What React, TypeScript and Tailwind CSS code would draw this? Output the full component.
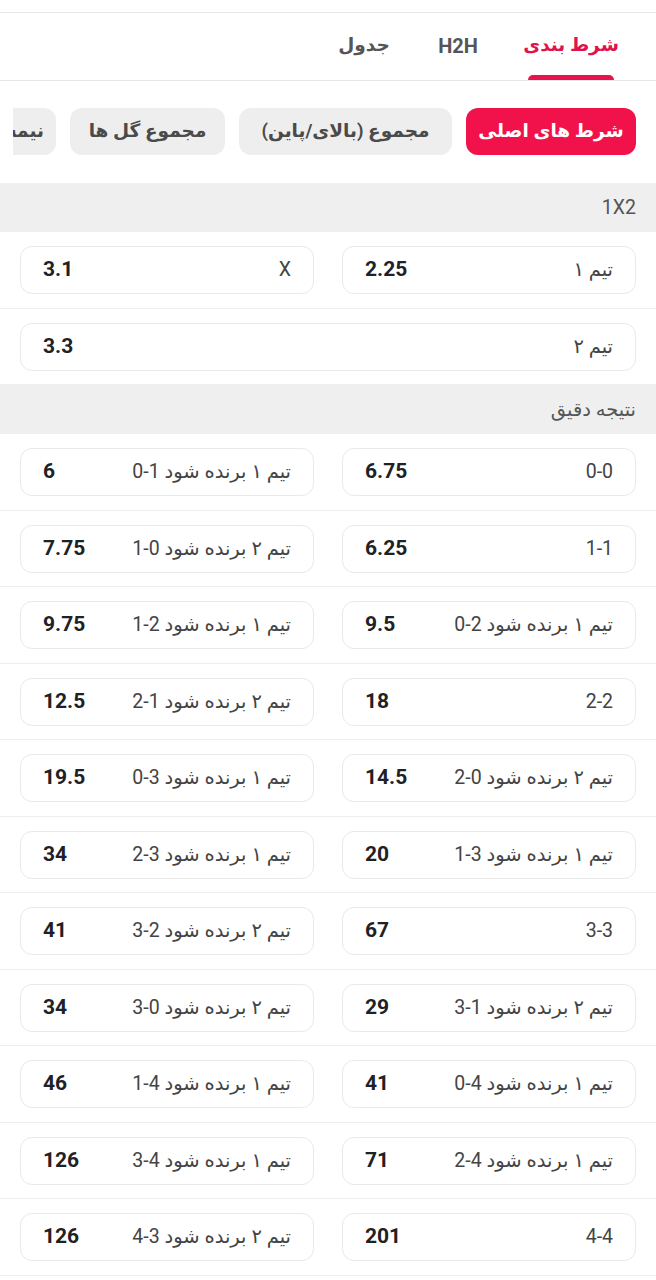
import React from "react";

type Odd = { label: string; value: string };

const tabs = [
  { label: "شرط بندی", w: "w-[86px]", size: "text-[18.5px]", active: true },
  { label: "H2H", w: "w-[44px]", size: "text-[20px]", active: false },
  { label: "جدول", w: "w-[48px]", size: "text-[18.5px]", active: false },
];

const chips = [
  { label: "شرط های اصلی", w: "w-[170px] justify-center", active: true },
  { label: "مجموع (بالای/پاین)", w: "w-[213px] justify-center", active: false },
  { label: "مجموع گل ها", w: "w-[155px] justify-center", active: false },
  { label: "نیمه اول", w: "px-[12px]", active: false },
];

const exact: [Odd, Odd][] = [
  [{ label: "0-0", value: "6.75" }, { label: "تیم ۱ برنده شود 1-0", value: "6" }],
  [{ label: "1-1", value: "6.25" }, { label: "تیم ۲ برنده شود 0-1", value: "7.75" }],
  [{ label: "تیم ۱ برنده شود 2-0", value: "9.5" }, { label: "تیم ۱ برنده شود 2-1", value: "9.75" }],
  [{ label: "2-2", value: "18" }, { label: "تیم ۲ برنده شود 1-2", value: "12.5" }],
  [{ label: "تیم ۲ برنده شود 0-2", value: "14.5" }, { label: "تیم ۱ برنده شود 3-0", value: "19.5" }],
  [{ label: "تیم ۱ برنده شود 3-1", value: "20" }, { label: "تیم ۱ برنده شود 3-2", value: "34" }],
  [{ label: "3-3", value: "67" }, { label: "تیم ۲ برنده شود 2-3", value: "41" }],
  [{ label: "تیم ۲ برنده شود 1-3", value: "29" }, { label: "تیم ۲ برنده شود 0-3", value: "34" }],
  [{ label: "تیم ۱ برنده شود 4-0", value: "41" }, { label: "تیم ۱ برنده شود 4-1", value: "46" }],
  [{ label: "تیم ۱ برنده شود 4-2", value: "71" }, { label: "تیم ۱ برنده شود 4-3", value: "126" }],
  [{ label: "4-4", value: "201" }, { label: "تیم ۲ برنده شود 3-4", value: "126" }],
];

const OddCard: React.FC<{ odd: Odd }> = ({ odd }) => (
  <div className="flex-1 h-12 rounded-xl border border-[#e9e9e9] bg-white flex items-center justify-between px-[22px]">
    <span className="text-[19.5px] text-[#444]">{odd.label}</span>
    <span className="text-[21px] font-bold text-[#1e2226]">{odd.value}</span>
  </div>
);

const Row: React.FC<{ children: React.ReactNode }> = ({ children }) => (
  <div className="flex gap-7 px-5 pt-[14px] pb-[13.5px] border-b border-[#eeeeee]">{children}</div>
);

const SectionHeader: React.FC<{ title: string }> = ({ title }) => (
  <div className="h-[49px] bg-[#efefef] flex items-center px-5 text-[19.5px] text-[#555]">{title}</div>
);

export default function App() {
  return (
    <div
      dir="rtl"
      className="w-[656px] min-h-[1280px] bg-white"
      style={{ fontFamily: 'Roboto, "DejaVu Sans", sans-serif' }}
    >
      <div className="h-3" />
      {/* tabs */}
      <div className="h-[69px] border-y border-[#e6e6e6] flex gap-12 pr-[42px]">
        {tabs.map((t) => (
          <div key={t.label} className={`${t.w} flex flex-col items-center`}>
            <div
              className={`flex-1 flex items-center pt-1 ${t.size} font-bold whitespace-nowrap ${
                t.active ? "text-[#e0134d]" : "text-[#555]"
              }`}
            >
              {t.label}
            </div>
            <div className={`h-[5px] w-full rounded-t-md ${t.active ? "bg-[#e8134d]" : ""}`} />
          </div>
        ))}
      </div>

      {/* chips */}
      <div className="pt-[27px] pb-7 pr-5 ml-[13px] overflow-hidden">
        <div className="flex gap-[14px]">
          {chips.map((c) => (
            <div
              key={c.label}
              className={`${c.w} shrink-0 h-[47px] rounded-xl flex items-center text-[18.5px] font-bold whitespace-nowrap ${
                c.active ? "bg-[#f2124b] text-white" : "bg-[#eeeeee] text-[#4a4a4a]"
              }`}
            >
              {c.label}
            </div>
          ))}
        </div>
      </div>

      <SectionHeader title="1X2" />
      <Row>
        <OddCard odd={{ label: "تیم ۱", value: "2.25" }} />
        <OddCard odd={{ label: "X", value: "3.1" }} />
      </Row>
      <Row>
        <OddCard odd={{ label: "تیم ۲", value: "3.3" }} />
      </Row>

      <SectionHeader title="نتیجه دقیق" />
      {exact.map(([a, b], i) => (
        <Row key={i}>
          <OddCard odd={a} />
          <OddCard odd={b} />
        </Row>
      ))}
    </div>
  );
}
